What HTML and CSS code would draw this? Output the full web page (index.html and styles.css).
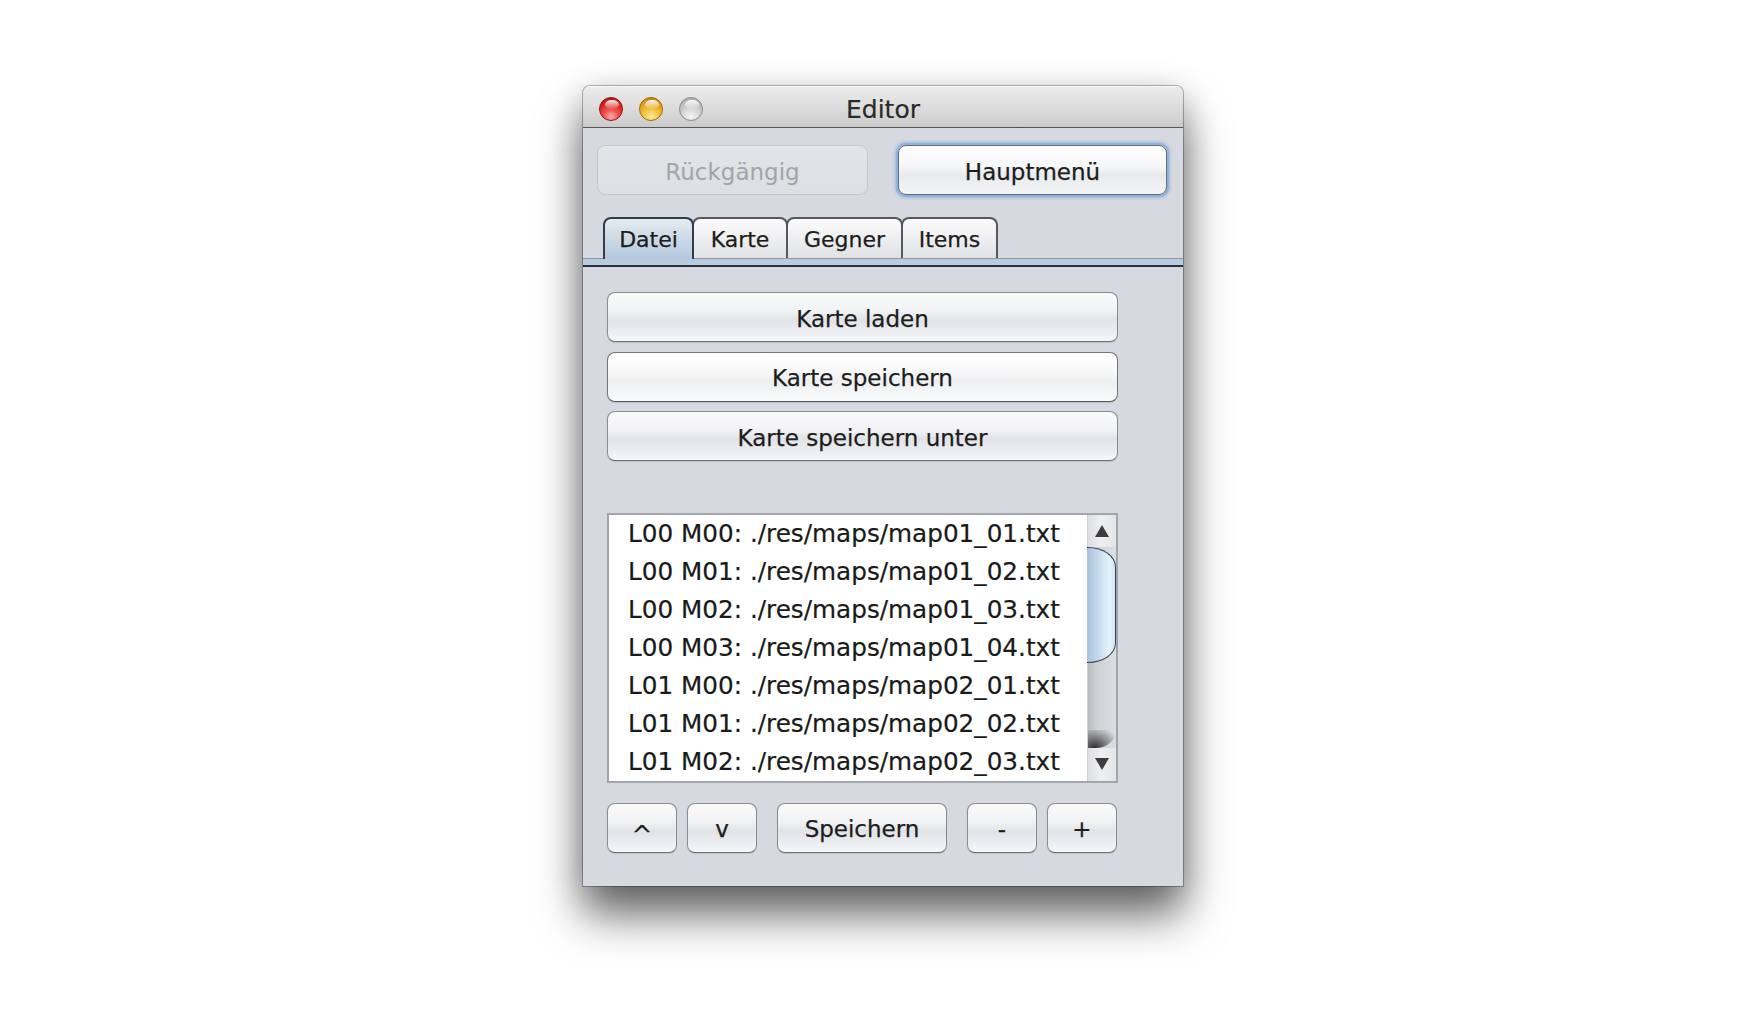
FILE: index.html
```html
<!DOCTYPE html>
<html lang="de">
<head>
<meta charset="utf-8">
<title>Editor</title>
<link rel="stylesheet" href="styles.css">
</head>
<body>
<div class="desk">
  <div class="window">
    <div class="titlebar">
      <div class="lights">
        <span class="light red"></span>
        <span class="light yellow"></span>
        <span class="light gray"></span>
      </div>
      <div class="title">Editor</div>
      <div></div>
    </div>
    <div class="toprow">
      <button class="btn disabled btn-undo">Rückgängig</button>
      <button class="btn focus btn-menu">Hauptmenü</button>
    </div>
    <div class="tabs">
      <div class="tab sel tab-datei">Datei</div>
      <div class="tab tab-karte">Karte</div>
      <div class="tab tab-gegner">Gegner</div>
      <div class="tab tab-items">Items</div>
    </div>
    <div class="band"></div>
    <div class="panel">
      <div class="stack">
        <button class="btn">Karte laden</button>
        <button class="btn bright">Karte speichern</button>
        <button class="btn">Karte speichern unter</button>
      </div>
      <div class="list">
        <div class="rows">
          <div class="row">L00 M00: ./res/maps/map01_01.txt</div>
          <div class="row">L00 M01: ./res/maps/map01_02.txt</div>
          <div class="row">L00 M02: ./res/maps/map01_03.txt</div>
          <div class="row">L00 M03: ./res/maps/map01_04.txt</div>
          <div class="row">L01 M00: ./res/maps/map02_01.txt</div>
          <div class="row">L01 M01: ./res/maps/map02_02.txt</div>
          <div class="row">L01 M02: ./res/maps/map02_03.txt</div>
        </div>
        <div class="scroll">
          <div class="sb-btn sb-up">
            <svg width="14" height="12" viewBox="0 0 14 12"><polygon points="7,0 14,12 0,12" fill="#3c3c3c"/></svg>
          </div>
          <div class="track">
            <div class="thumb"></div>
            <div class="track-rest"></div>
            <div class="track-end"></div>
          </div>
          <div class="sb-btn sb-down">
            <svg width="14" height="12" viewBox="0 0 14 12"><polygon points="0,0 14,0 7,12" fill="#3c3c3c"/></svg>
          </div>
        </div>
      </div>
      <div class="bottomrow">
        <button class="btn small caret">^</button>
        <button class="btn small">v</button>
        <button class="btn wide">Speichern</button>
        <button class="btn small">-</button>
        <button class="btn small">+</button>
      </div>
    </div>
  </div>
</div>
</body>
</html>
```

FILE: styles.css
```css
html, body {
  margin: 0;
  background: #ffffff;
}

body {
  font-family: "DejaVu Sans", "Liberation Sans", sans-serif;
}

.desk {
  box-sizing: border-box;
  height: 1028px;
  padding: 86px 0 0 583px;
}

.window {
  width: 600px;
  background: #d6d9df;
  border-radius: 7px 7px 0 0;
  overflow: hidden;
  box-shadow:
    0 0 0 1px rgba(0, 0, 0, 0.28),
    0 30px 45px 0 rgba(0, 0, 0, 0.55),
    0 8px 34px 0 rgba(0, 0, 0, 0.22);
}

/* ---------- title bar ---------- */
.titlebar {
  height: 41px;
  border-bottom: 1px solid #555555;
  background: linear-gradient(#ececec 0%, #dcdcdc 55%, #cbcbcb 100%);
  box-shadow: inset 0 1px 0 rgba(255, 255, 255, 0.85);
  display: grid;
  grid-template-columns: 1fr auto 1fr;
  align-items: start;
}

.lights {
  display: flex;
  gap: 16px;
  padding: 11px 0 0 16px;
}

.light {
  position: relative;
  width: 24px;
  height: 24px;
  border-radius: 50%;
  box-sizing: border-box;
}

.light::after {
  content: "";
  position: absolute;
  left: 5px;
  top: 2px;
  width: 14px;
  height: 9px;
  border-radius: 50%;
  background: linear-gradient(rgba(255, 255, 255, 0.95), rgba(255, 255, 255, 0.05));
}

.red {
  background: radial-gradient(circle at 50% 85%, #ffb4ae 0%, #f25a54 30%, #dc2424 62%, #a60f10 100%);
  border: 1px solid #8a1414;
}

.yellow {
  background: radial-gradient(circle at 50% 85%, #ffeaa0 0%, #f7c748 32%, #e3a019 65%, #b87406 100%);
  border: 1px solid #9c6a0c;
}

.gray {
  background: radial-gradient(circle at 50% 85%, #f6f6f6 0%, #dadada 35%, #bdbdbd 70%, #9a9a9a 100%);
  border: 1px solid #8a8a8a;
}

.title {
  font-size: 25px;
  line-height: 25px;
  padding-top: 11px;
  color: #2a2a2a;
  -webkit-text-stroke: 0.2px #2a2a2a;
}

/* ---------- buttons ---------- */
.btn {
  box-sizing: border-box;
  height: 50px;
  margin: 0;
  padding: 4px 0 0;
  border: 1.5px solid #8a8c90;
  border-bottom-color: #6e7074;
  border-radius: 8px;
  background: linear-gradient(#fbfbfc 0%, #f1f2f4 38%, #e2e3e7 56%, #eceef1 82%, #f7f7f9 100%);
  box-shadow: 0 1px 1px rgba(0, 0, 0, 0.12);
  font-family: "DejaVu Sans", "Liberation Sans", sans-serif;
  font-size: 23px;
  line-height: 1;
  color: #1d1d1d;
  -webkit-text-stroke: 0.25px #1d1d1d;
  display: flex;
  align-items: center;
  justify-content: center;
}

.btn.bright {
  background: linear-gradient(#ffffff 0%, #f8f8f9 40%, #eeeff1 58%, #f5f6f7 85%, #fcfcfd 100%);
  border-color: #737579;
  border-bottom-color: #55575b;
}

.btn.disabled {
  background: linear-gradient(#e3e5e8, #dcdfe3);
  border-color: #c5c7cb;
  color: #a3a5a8;
  -webkit-text-stroke: 0;
  box-shadow: none;
}

.btn.focus {
  background: linear-gradient(#ffffff 0%, #f6f7f8 42%, #e9eaed 60%, #f3f4f5 100%);
  border-color: #6a6e74;
  box-shadow: 0 0 0 2px #8cb2e0, 0 0 3px 3px rgba(90, 145, 215, 0.45);
}

.toprow {
  display: flex;
  justify-content: space-between;
  padding: 17px 16px 0 14px;
}

.btn-undo { width: 271px; }
.btn-menu { width: 269px; }

/* ---------- tabs ---------- */
.tabs {
  display: flex;
  align-items: flex-end;
  height: 41px;
  margin-top: 22px;
  padding-left: 20px;
}

.tab {
  box-sizing: border-box;
  height: 41px;
  padding-top: 3px;
  border: 2px solid #55585c;
  border-bottom: none;
  border-radius: 8px 8px 0 0;
  background: linear-gradient(#fbfbfb 0%, #efeff1 50%, #e1e2e5 100%);
  font-size: 22px;
  line-height: 36px;
  text-align: center;
  color: #1d1d1d;
  -webkit-text-stroke: 0.25px #1d1d1d;
}

.tab + .tab { margin-left: -2px; }

.tab.sel {
  position: relative;
  z-index: 1;
  height: 42px;
  margin-bottom: -1px;
  border-color: #2f3d4d;
  background: linear-gradient(#e6ebf0 0%, #ccd9e6 50%, #b3c9de 100%);
}

.tab-datei { width: 91px; }
.tab-karte { width: 96px; }
.tab-gegner { width: 117px; }
.tab-items { width: 97px; }

.band {
  height: 6px;
  border-top: 1px solid #8e969f;
  border-bottom: 2px solid #29313b;
  background: #b8cce0;
}

/* ---------- panel ---------- */
.panel {
  padding: 25px 0 33px 24px;
}

.stack {
  display: flex;
  flex-direction: column;
  gap: 9.5px;
  width: 511px;
}

.list {
  box-sizing: border-box;
  width: 511px;
  height: 270px;
  margin-top: 51.5px;
  border: 2px solid #a2a5aa;
  background: #ffffff;
  display: flex;
}

.rows {
  flex: 1;
  padding-left: 19px;
  font-size: 24.7px;
  line-height: 38px;
  color: #1a1a1a;
  -webkit-text-stroke: 0.2px #1a1a1a;
  white-space: nowrap;
  overflow: hidden;
}

.scroll {
  width: 29px;
  display: flex;
  flex-direction: column;
  background: linear-gradient(to right, #dedfe2 0%, #efeff1 45%, #e4e5e8 100%);
  border-left: 1px solid #cfd1d4;
  box-sizing: border-box;
}

.sb-btn {
  display: flex;
  align-items: center;
  justify-content: center;
}

.sb-up { height: 32px; }
.sb-down { height: 33px; }

.track {
  flex: 1;
  display: flex;
  flex-direction: column;
  background: linear-gradient(to right, #b9bbbf 0%, #d2d3d7 35%, #dcdde0 100%);
}

.thumb {
  box-sizing: border-box;
  height: 116px;
  margin-left: -1px;
  border: 1.5px solid #34465a;
  border-left: none;
  border-radius: 0 28px 28px 0 / 0 20px 20px 0;
  background: linear-gradient(to right, #a9c1da 0%, #c6daec 40%, #e2f2fb 80%, #d3e6f3 100%);
}

.track-rest { flex: 1; }

.track-end {
  height: 18px;
  border-radius: 0 0 20px 0 / 0 0 18px 0;
  background:
    radial-gradient(ellipse at 25% 100%, rgba(30, 30, 30, 0.9) 0%, rgba(90, 90, 90, 0.6) 45%, rgba(200, 200, 205, 0) 85%),
    linear-gradient(to right, #b9bbbf, #d2d3d7 35%, #dcdde0);
}

/* ---------- bottom row ---------- */
.bottomrow {
  display: flex;
  gap: 10px;
  width: 511px;
  margin-top: 20px;
}

.btn.small { width: 70px; }
.btn.wide { width: 170px; margin: 0 10px; }
.btn.caret { padding-top: 14px; font-size: 25px; }
```
